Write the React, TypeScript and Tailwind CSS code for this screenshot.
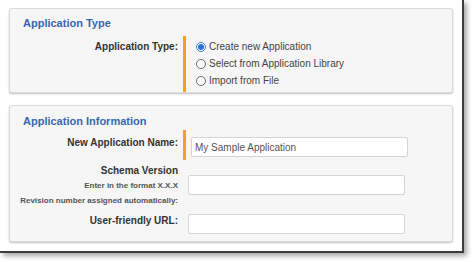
const font = { fontFamily: '"Liberation Sans", Arial, sans-serif' }

const Radio = ({ checked, label }: { checked?: boolean; label: string }) => (
  <div className="flex h-[17px] items-center">
    <span
      className={
        checked
          ? 'flex h-[10px] w-[10px] items-center justify-center rounded-full border border-[#3b7fd9] bg-white'
          : 'flex h-[10px] w-[10px] items-center justify-center rounded-full border border-[#6b6b6b] bg-white'
      }
    >
      {checked && <span className="h-[6px] w-[6px] rounded-full bg-[#2a73d6]" />}
    </span>
    <span className="ml-[3px] text-[10px] leading-[17px] text-[#444]">{label}</span>
  </div>
)

const Field = ({ value }: { value?: string }) => (
  <div className="flex h-[20px] w-[217px] items-center rounded-[2px] border border-[#d4d4d4] bg-white pl-[3px] text-[10px] text-[#555]">
    {value}
  </div>
)

const Bar = ({ className }: { className?: string }) => <div className={`w-[3px] bg-[#f0a030] ${className ?? ''}`} />

export default function App() {
  return (
    <div className="h-[262px] w-[474px] bg-white" style={font}>
      <div className="h-[253px] w-[464px] border-r-2 border-b-2 border-[#3c3c3c] bg-white pt-[8px] pl-[9px] shadow-[3px_3px_5px_rgba(0,0,0,0.35)]">
        {/* application type */}
        <div className="flex h-[85px] w-[444px] flex-col rounded-[3px] border border-[#dadada] bg-[#f6f6f6] shadow-[0_1px_2px_rgba(0,0,0,0.25)]">
          <div className="pt-[7px] pl-[13px] text-[11px] leading-[14px] font-bold text-[#3568b0]">Application Type</div>
          <div className="mt-[6px] flex flex-1">
            <div className="w-[168px] pt-[2px] text-right text-[10px] leading-[17px] font-bold text-[#333]">Application Type:</div>
            <Bar className="ml-[5px]" />
            <div className="ml-[10px] pt-[2px]">
              <Radio checked label="Create new Application" />
              <Radio label="Select from Application Library" />
              <Radio label="Import from File" />
            </div>
          </div>
        </div>

        {/* application information */}
        <div className="mt-[12px] flex h-[137px] w-[444px] flex-col rounded-[3px] border border-[#dadada] bg-[#f6f6f6] shadow-[0_1px_2px_rgba(0,0,0,0.25)]">
          <div className="pt-[8px] pl-[13px] text-[11px] leading-[14px] font-bold text-[#3568b0]">Application Information</div>

          <div className="mt-[2px] flex h-[30px]">
            <div className="w-[168px] pt-[6px] text-right text-[10px] leading-[14px] font-bold text-[#333]">New Application Name:</div>
            <Bar className="ml-[5px]" />
            <div className="ml-[5px] pt-[7px]">
              <Field value="My Sample Application" />
            </div>
          </div>

          <div className="mt-[4px] flex">
            <div className="w-[168px] text-right font-bold">
              <div className="text-[10px] leading-[14px] text-[#333]">Schema Version</div>
              <div className="text-[8px] leading-[15px] text-[#555]">Enter in the format X.X.X</div>
              <div className="text-[8px] leading-[15px] text-[#555]">Revision number assigned automatically:</div>
            </div>
            <div className="ml-[10px] pt-[11px]">
              <Field />
            </div>
          </div>

          <div className="mt-[6px] flex">
            <div className="w-[168px] text-right text-[10px] leading-[14px] font-bold text-[#333]">User-friendly URL:</div>
            <div className="ml-[10px]">
              <Field />
            </div>
          </div>
        </div>
      </div>
    </div>
  )
}
